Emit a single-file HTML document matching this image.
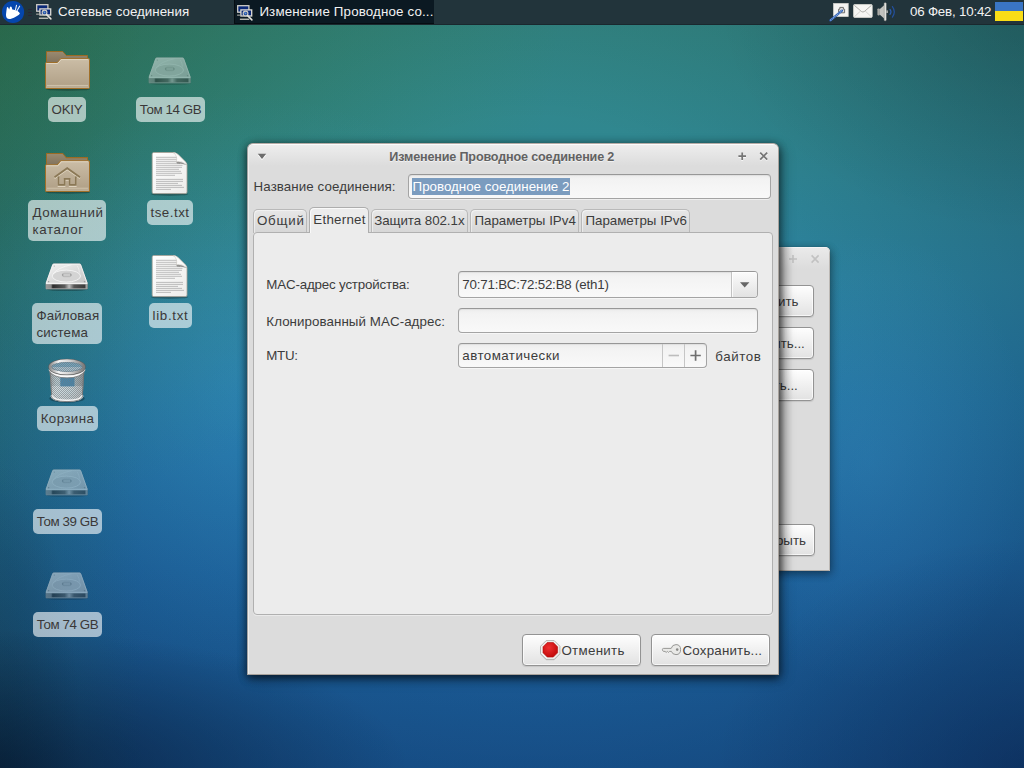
<!DOCTYPE html>
<html lang="ru">
<head>
<meta charset="utf-8">
<title>Изменение Проводное соединение 2</title>
<style>
*{box-sizing:border-box;margin:0;padding:0}
html,body{width:1024px;height:768px;overflow:hidden}
body{position:relative;font-family:"Liberation Sans","DejaVu Sans",sans-serif;font-size:13.33px;color:#3c3c3c;
background:
radial-gradient(ellipse 40% 18% at 0% 100%, rgba(0,10,30,0.50) 0%, rgba(0,10,30,0) 100%),
radial-gradient(ellipse 8% 40% at 0% 100%, rgba(0,10,30,0.25) 0%, rgba(0,10,30,0) 100%),
radial-gradient(ellipse 30% 30% at 100% 100%, rgba(0,10,50,0.30) 0%, rgba(0,10,50,0) 100%),
radial-gradient(ellipse 30% 30% at 100% 0%, rgba(0,10,20,0.18) 0%, rgba(0,10,20,0) 100%),
linear-gradient(90deg, rgba(40,100,40,0.16) 0%, rgba(40,100,40,0) 14%),
radial-gradient(ellipse 16% 30% at 85% 60%, rgba(80,170,235,0.15) 0%, rgba(80,170,235,0) 100%),
radial-gradient(ellipse 30% 38% at 24% 50%, rgba(70,175,235,0.22) 0%, rgba(70,175,235,0) 100%),
radial-gradient(ellipse 78% 88% at 52% 42%, rgba(0,0,0,0) 30%, rgba(0,10,28,0.34) 100%),
radial-gradient(ellipse 55% 65% at 0% 0%, rgba(60,135,45,0.40) 0%, rgba(60,135,45,0) 100%),
linear-gradient(180deg,#348882 0%,#308790 18%,#2c83a0 36%,#2578a6 52%,#1f69a6 74%,#1b5c9c 100%);
}
.abs{position:absolute}
/* panel */
#panel{position:absolute;left:0;top:0;width:1024px;height:25px;background:#22343b;border-bottom:1px solid #1a282e;color:#fff}
#panel .t{position:absolute;top:3px;line-height:17px;font-size:13.33px;white-space:nowrap;color:#f2f2f2}
#task2{position:absolute;left:234px;top:0;width:200px;height:24px;background:#0b1922;box-shadow:inset 1px 0 0 #060d12,inset 0 -1px 0 #060d12}
/* desktop labels */
.lbl{position:absolute;background:rgba(255,255,255,0.6);border-radius:5px;color:#3a3838;font-size:13.33px;line-height:16.33px;padding:5.2px 0 3.5px 0;white-space:nowrap;text-align:center}
.lbl.two{text-align:left;padding-left:4.4px}
/* window */
#win{position:absolute;left:247px;top:143px;width:532px;height:532px;background:#dcdcdc;border:1px solid #a8a29c;border-top-color:#b5aba6;border-left-color:#a2a2a2;border-radius:6px 6px 0 0;box-shadow:inset 0 1px 0 #fbfbfb,inset 1px 0 0 #ececec,0 2px 8px rgba(0,0,0,0.42),0 3px 9px rgba(0,0,0,0.34),4px 4px 14px rgba(0,0,0,0.24)}
#tb{position:absolute;left:1px;top:1px;right:0;height:21px;border-radius:4px 4px 0 0;background:linear-gradient(#ededed,#dcdcdc)}
#title{position:absolute;white-space:nowrap;font-weight:bold;font-size:12.6px;letter-spacing:-0.16px;line-height:17px;color:#626262;text-shadow:0 1px 0 rgba(255,255,255,0.6)}
.entry{position:absolute;background:linear-gradient(#ededed 0,#f3f3f3 5px,#f9f9f9 100%);border:1px solid #a4a4a4;border-top-color:#979797;border-radius:4px;box-shadow:inset 0 1px 1px rgba(0,0,0,0.06), 0 1px 0 rgba(255,255,255,0.55)}
.sel{position:absolute;background:#7b9cbf}
.tab{position:absolute;top:65px;height:24px;border:1px solid #b9b9b9;border-bottom:none;border-radius:5px 5px 0 0;background:linear-gradient(#e7e7e7,#d6d6d6);box-shadow:inset 1px 1px 0 rgba(255,255,255,0.45);font-size:13.33px;white-space:nowrap;color:#3c3c3c}
.tab span{position:absolute;top:2.4px;line-height:17px}
.tab.act{top:63px;height:26px;background:#ececec;border-color:#adadad;box-shadow:inset 1px 1px 0 rgba(255,255,255,0.7)}
.tab.act span{top:3.3px}
#page{position:absolute;left:5px;top:88px;width:520px;height:383px;background:#ececec;border:1px solid #b0b0b0;border-radius:4px;box-shadow:0 1px 0 rgba(255,255,255,0.4)}
.l{position:absolute;white-space:nowrap;line-height:17px;font-size:13.33px;color:#3c3c3c}
.btn{position:absolute;border:1px solid #939393;border-radius:4px;background:linear-gradient(#fefefe,#f0f0f0 50%,#e2e2e2);box-shadow:inset 0 0 0 1px rgba(255,255,255,0.7),0 1px 1px rgba(0,0,0,0.10);font-size:13.33px;line-height:17px;white-space:nowrap;color:#3c3c3c}
.btn span{margin-top:7px}
.cbtn{position:absolute;right:0;top:0;width:26px;height:25px;border-left:1px solid #c2c2c2;border-radius:0 3px 3px 0;background:linear-gradient(#fbfbfb,#e2e2e2);box-shadow:inset 1px 1px 0 rgba(255,255,255,0.8)}
.sb{position:absolute;top:0;width:22px;height:23px;border-left:1px solid #c6c6c6}
/* second window */
#win2{position:absolute;left:764px;top:247px;width:66px;height:324px;background:#dcdcdc;border-radius:0 5px 0 0;box-shadow:inset 0 1px 0 #f4f4f4,inset -1px 0 0 #bcb8b4,inset 0 -1px 0 #b2aca6,0 0 1px rgba(0,0,0,0.3),0 2px 8px rgba(0,0,0,0.32),2px 3px 10px rgba(0,0,0,0.2);overflow:visible}
#tb2{position:absolute;left:0;top:1px;right:1px;height:21px;border-radius:0 4px 0 0;background:linear-gradient(#eaeaea,#dcdcdc)}
#sh2{position:absolute;left:15px;top:0;width:14px;height:324px;background:linear-gradient(90deg,rgba(0,0,0,0.30),rgba(0,0,0,0.10) 45%,rgba(0,0,0,0))}
</style>
</head>
<body>

<svg width="0" height="0" style="position:absolute">
<defs>
  <linearGradient id="gFront" x1="0" y1="0" x2="0" y2="1"><stop offset="0" stop-color="#cbbda6"/><stop offset="0.85" stop-color="#b3a38a"/><stop offset="1" stop-color="#bfb199"/></linearGradient>
  <linearGradient id="gBack" x1="0" y1="0" x2="0" y2="1"><stop offset="0" stop-color="#9a8a70"/><stop offset="1" stop-color="#7f705a"/></linearGradient>
  <linearGradient id="gDrvTop" x1="0" y1="0" x2="1" y2="1"><stop offset="0" stop-color="#f4f4f4"/><stop offset="0.5" stop-color="#dcdcdc"/><stop offset="1" stop-color="#c4c4c4"/></linearGradient>
  <linearGradient id="gDrvFront" x1="0" y1="0" x2="1" y2="0"><stop offset="0" stop-color="#9a9a9a"/><stop offset="0.12" stop-color="#8a8a8a"/><stop offset="0.16" stop-color="#2c2c2c"/><stop offset="0.45" stop-color="#5a5a5a"/><stop offset="0.56" stop-color="#bdbdbd"/><stop offset="0.68" stop-color="#555"/><stop offset="0.95" stop-color="#3a3a3a"/><stop offset="0.97" stop-color="#b0b0b0"/><stop offset="1" stop-color="#8c8c8c"/></linearGradient>
  <linearGradient id="gDoc" x1="0" y1="0" x2="1" y2="1"><stop offset="0" stop-color="#ffffff"/><stop offset="1" stop-color="#ececea"/></linearGradient>
  <linearGradient id="gRim" x1="0" y1="0" x2="1" y2="0"><stop offset="0" stop-color="#8e8e8e"/><stop offset="0.25" stop-color="#f4f4f4"/><stop offset="0.6" stop-color="#d0d0d0"/><stop offset="1" stop-color="#7c7c7c"/></linearGradient>
  <linearGradient id="gBody" x1="0" y1="0" x2="1" y2="0"><stop offset="0" stop-color="#9a9a9a" stop-opacity="0.95"/><stop offset="0.2" stop-color="#e8e8e8" stop-opacity="0.75"/><stop offset="0.6" stop-color="#dcdcdc" stop-opacity="0.7"/><stop offset="1" stop-color="#8a8a8a" stop-opacity="0.95"/></linearGradient>
  <radialGradient id="gStop" cx="0.4" cy="0.35" r="0.7"><stop offset="0" stop-color="#ee3030"/><stop offset="1" stop-color="#c00808"/></radialGradient>
  <pattern id="mesh" width="2" height="2" patternUnits="userSpaceOnUse"><rect width="1" height="1" fill="#6e7478" fill-opacity="0.55"/><rect x="1" y="1" width="1" height="1" fill="#6e7478" fill-opacity="0.55"/></pattern>

  <symbol id="folder" viewBox="0 0 46 42">
    <ellipse cx="23" cy="39.2" rx="22" ry="1.6" fill="#000" fill-opacity="0.28"/>
    <path d="M1.5,1.5 H17.8 L21.3,5.5 H42.5 V14 H1.5 Z" fill="url(#gBack)" stroke="#9b6b24" stroke-width="1" stroke-linejoin="round"/>
    <path d="M0.5,13.5 Q0.5,12.5 1.5,12.5 H12.3 L15.8,8.6 H43.5 Q44.5,8.6 44.5,9.6 V37.5 Q44.5,38.5 43.5,38.5 H1.5 Q0.5,38.5 0.5,37.5 Z" fill="url(#gFront)" stroke="#a06f28" stroke-width="1" stroke-linejoin="round"/>
    <path d="M1.5,14 Q1.5,13.5 2,13.5 H12.7 L16.2,9.6 H43" fill="none" stroke="#e2d8c6" stroke-width="1" stroke-opacity="0.9"/>
    <path d="M2,35.5 H43" stroke="#d6cab4" stroke-width="1" stroke-opacity="0.7"/>
  </symbol>

  <symbol id="home" viewBox="0 0 46 42" preserveAspectRatio="none">
    <use href="#folder"/>
    <g fill="none" stroke="#e6dcc8" stroke-width="1.6" stroke-opacity="0.85" transform="translate(0,1.2)"><path d="M9.5,24.6 L22.2,15.8 L35,24.6"/><path d="M13.5,24 V32.2 H19.6 V26.2 H24.6 V32.2 H30.8 V24"/></g>
    <g fill="none" stroke="#8b7856" stroke-width="1.7"><path d="M9.5,24.6 L22.2,15.8 L35,24.6"/><path d="M13.5,24 V32.2 H19.6 V26.2 H24.6 V32.2 H30.8 V24"/></g>
  </symbol>

  <symbol id="drive" viewBox="0 0 46 30">
    <ellipse cx="23" cy="27.6" rx="21.5" ry="1.6" fill="#000" fill-opacity="0.25"/>
    <path d="M0.6,21.6 Q0.6,20.6 1.1,19.8 L7.6,1.6 Q8,0.6 9,0.6 H36 Q37,0.6 37.4,1.6 L43.9,19.8 Q44.4,20.6 44.4,21.6 V26.2 Q44.4,27.2 43.4,27.2 H1.6 Q0.6,27.2 0.6,26.2 Z" fill="#8f8f8f"/>
    <path d="M1.2,21 L8,1.8 Q8.3,1.1 9.2,1.1 H35.8 Q36.7,1.1 37,1.8 L43.8,21 Z" fill="url(#gDrvTop)" stroke="#fafafa" stroke-width="0.9"/>
    <ellipse cx="22.2" cy="13.6" rx="14.7" ry="6.2" fill="#d4d4d4" stroke="#f4f4f4" stroke-width="0.9"/>
    <path d="M8.2,11.6 Q13,4.6 27.5,1.8" fill="none" stroke="#f6f6f6" stroke-width="0.9"/>
    <path d="M33.5,3 Q35.5,6 35.8,10" fill="none" stroke="#f0f0f0" stroke-width="0.8"/>
    <rect x="17.9" y="10.6" width="9.4" height="3.6" rx="1.8" fill="#cacaca" stroke="#a8a8a8" stroke-width="0.6"/>
    <circle cx="18.5" cy="12.4" r="0.7" fill="#8a8a8a"/><circle cx="26.8" cy="12.4" r="0.7" fill="#8a8a8a"/>
    <circle cx="3.8" cy="19.4" r="0.7" fill="#9a9a9a"/><circle cx="41" cy="19.4" r="0.7" fill="#9a9a9a"/><circle cx="9.6" cy="3.2" r="0.6" fill="#aaa"/>
    <path d="M1,21.6 H44" stroke="#fbfbfb" stroke-width="1.1"/>
    <rect x="1.2" y="22.3" width="42.6" height="4.3" fill="url(#gDrvFront)"/>
    <path d="M1,26.7 H44" stroke="#a4a4a4" stroke-width="0.8"/>
  </symbol>

  <symbol id="doc" viewBox="0 0 40 46">
    <ellipse cx="19.6" cy="42.2" rx="18.4" ry="1.6" fill="#000" fill-opacity="0.3"/>
    <path d="M3.7,0.5 H23 Q26,0.5 28,2.5 L35.5,10 Q37,11.5 37,13.5 V40.1 Q37,41.6 35.5,41.6 H3.7 Q2.2,41.6 2.2,40.1 V2 Q2.2,0.5 3.7,0.5 Z" fill="url(#gDoc)" stroke="#aaa297" stroke-width="0.8"/>
    <g stroke="#b6b6b6" stroke-width="0.9">
      <path d="M6,5.3H27.5M6,7.3H28.5M6,9.3H29M6,11.3H30M6,13.3H32.5M6,15.3H32M6,17.3H29M6,19.3H31M6,21.3H32M6,23.3H25M6,27.4H33M6,29.4H33M6,31.4H28M6,33.4H32M6,35.4H34M6,37.4H21"/>
    </g>
    <path d="M26.2,9.6 Q31.5,8.8 36.9,13 Q32,11.2 27,11.4 Z" fill="#6e6e6c" fill-opacity="0.75"/>
    <path d="M23.4,0.6 Q27.8,4 26.4,9.8 Q32,8.4 36.8,12.6 Q36.6,11.2 35.5,10 L28,2.5 Q26,0.6 23.4,0.6 Z" fill="#fbfbfa" stroke="#c4c0ba" stroke-width="0.5" stroke-linejoin="round"/>
  </symbol>

  <symbol id="trash" viewBox="0 0 44 50">
    <ellipse cx="22" cy="42.4" rx="17.6" ry="4.4" fill="#000" fill-opacity="0.28"/>
    <path d="M4.4,11 L6.2,39.6 Q6.6,45.4 22,45.4 Q37.4,45.4 37.8,39.6 L39.6,11 Z" fill="url(#gBody)"/>
    <rect x="15.3" y="19.6" width="14.2" height="11.2" fill="#2a78a8" fill-opacity="0.8"/>
    <path d="M6,30 H38 L37.6,40 Q37,45 22,45 Q7,45 6.4,40 Z" fill="#fff" fill-opacity="0.35"/>
    <path d="M4.4,11 L6.2,39.6 Q6.6,45.4 22,45.4 Q37.4,45.4 37.8,39.6 L39.6,11 Z" fill="url(#mesh)"/>
    <path d="M6.6,39.4 Q7.6,44.6 22,44.6 Q36.4,44.6 37.4,39.4" fill="none" stroke="#f4f4f4" stroke-width="2.4" stroke-opacity="0.95"/>
    <path d="M6.2,39.6 Q6.6,45.6 22,45.6 Q37.4,45.6 37.8,39.6" fill="none" stroke="#6e6e6e" stroke-width="0.8"/>
    <path d="M5,12 L6.6,39 M39,12 L37.4,39" stroke="#6a6a6a" stroke-width="0.9" stroke-opacity="0.8"/>
    <ellipse cx="22" cy="10.9" rx="15.4" ry="5" fill="#7fb0cc" fill-opacity="0.6"/>
    <ellipse cx="22" cy="10.9" rx="15.4" ry="5" fill="url(#mesh)"/>
    <path d="M4,11 V14.2 Q8,21.6 22,21.6 Q36,21.6 40,14.2 V11 Z" fill="#cfcfcf"/>
    <path d="M4.2,13.4 Q8,20.6 22,20.6 Q36,20.6 39.8,13.4" fill="none" stroke="#fafafa" stroke-width="1.6"/>
    <path d="M4,14.4 Q8,21.9 22,21.9 Q36,21.9 40,14.4" fill="none" stroke="#7a7a7a" stroke-width="0.7"/>
    <ellipse cx="22" cy="10.9" rx="15.4" ry="5" fill="#2a6f96" fill-opacity="0.0"/>
    <ellipse cx="22" cy="10.9" rx="16.8" ry="6.3" fill="none" stroke="#5e5e5e" stroke-width="3.8"/>
    <ellipse cx="22" cy="10.9" rx="16.8" ry="6.3" fill="none" stroke="url(#gRim)" stroke-width="2.7"/>
    <ellipse cx="22" cy="10.9" rx="15.4" ry="5" fill="#7fb0cc" fill-opacity="0.55"/>
    <ellipse cx="22" cy="10.9" rx="15.4" ry="5" fill="url(#mesh)"/>
  </symbol>

  <symbol id="netwin" viewBox="0 0 16 16">
    <rect x="0.7" y="0.7" width="11.2" height="6.5" fill="#0a2878" stroke="#cfcdc7" stroke-width="1.3"/>
    <rect x="0.1" y="9.6" width="2.8" height="1.1" fill="#b4b2ac"/>
    <rect x="3.9" y="4.9" width="10.8" height="6.1" fill="#0a2878" stroke="#dddbd5" stroke-width="1.3"/>
    <rect x="2.9" y="13.6" width="9.4" height="1.3" fill="#cbc9c3"/>
    <circle cx="8.55" cy="8.55" r="2.4" fill="#3f6fb8" fill-opacity="0.55" stroke="#cfcdc7" stroke-width="1.1"/>
    <path d="M7.4,7.4 L9.2,9" stroke="#6b9be0" stroke-width="1.1"/>
    <path d="M10.6,10.6 L14.9,14.9" stroke="#e6e4de" stroke-width="1.5" stroke-linecap="round"/>
  </symbol>
</defs>
</svg>
<div id="panel">
  <svg class="abs" style="left:0;top:0" width="34" height="24" viewBox="0 0 34 24">
    <circle cx="13.05" cy="12" r="11.1" fill="#0546ad"/>
    <path d="M6.9,7.4 Q7.6,6.6 8.2,7.6 L9.2,9.5 L10,7 Q10.8,6 11.6,7 L12.3,9.6 Q15,9.9 17.6,10.9 Q19.4,11.9 19.9,13.4 Q19.2,14.9 17.4,15.8 Q14,18 10.4,18.9 Q8,19.2 6.8,18 Q5.8,16.6 6,14.6 Q6.3,11 6.9,7.4 Z" fill="#fff"/>
    <path d="M15.5,9.6 L16.5,5.3 M17.2,10.4 L19.6,6.2" stroke="#fff" stroke-width="1.1" stroke-linecap="round" fill="none" stroke-opacity="0.92"/>
    <path d="M28.2,9.5h3.6M28.2,12.5h3.6M28.2,15.5h3.6" stroke="#2a2434" stroke-width="1"/>
  </svg>
  <svg class="abs" style="left:36.4px;top:4.4px" width="16" height="16"><use href="#netwin"/></svg>
  <div id="task2"></div>
  <svg class="abs" style="left:237.2px;top:5.2px" width="16" height="16"><use href="#netwin"/></svg>
  <div class="t" style="left:58px">Сетевые соединения</div>
  <div class="t" style="left:259.4px;letter-spacing:0.15px">Изменение Проводное со...</div>
  <!-- tray -->
  <svg class="abs" style="left:828px;top:0" width="72" height="24" viewBox="0 0 72 24">
    <rect x="5.6" y="3.5" width="14.6" height="13" fill="#f4f4f2" stroke="#d4d4d0" stroke-width="0.8"/>
    <path d="M10.6,12.8 V9.2 H11.8 V7.4 H15.4 V9.2 H16.6 V12.8 Z" fill="#e0e0de" stroke="#6e6e6e" stroke-width="1"/>
    <path d="M2.4,20.4 L14,10.6" stroke="#2c5cae" stroke-width="2.3" stroke-linecap="round"/>
    <path d="M2.4,20.4 L14,10.6" stroke="#8db0ea" stroke-width="1.5" stroke-dasharray="0.9 0.9"/>
    <rect x="25.6" y="4.6" width="18.6" height="12.8" rx="0.8" fill="#f6f6f4" stroke="#deded8" stroke-width="0.8"/>
    <path d="M26.4,5.4 L33.6,11.6 Q34.9,12.4 36.2,11.6 L43.4,5.4" fill="none" stroke="#9c9c98" stroke-width="0.8"/>
    <path d="M26.4,16.8 L32.6,11 M43.4,16.8 L37.2,11" fill="none" stroke="#c4c4c0" stroke-width="0.7"/>
    <rect x="49.4" y="8.4" width="2.4" height="7" rx="0.8" fill="#a8a8a4"/>
    <path d="M51.6,9.2 L56.4,5 V18.8 L51.6,14.6 Z" fill="#c2c2be"/>
    <rect x="56.2" y="2.8" width="2" height="18" rx="0.8" fill="#f0f0ec" stroke="#8e8e8a" stroke-width="0.5"/>
    <rect x="58.3" y="10.4" width="1.6" height="2.6" fill="#b0b0ac"/>
    <path d="M62,9.4 Q64,11.8 62,14.4" fill="none" stroke="#2c5cae" stroke-width="1.2" stroke-linecap="round"/>
    <path d="M64.4,6.6 Q68.2,11.8 64.4,17.2" fill="none" stroke="#23509e" stroke-width="1.2" stroke-linecap="round"/>
  </svg>
  <div class="t" style="left:910px;letter-spacing:-0.2px">06 Фев, 10:42</div>
  <div class="abs" style="left:995px;top:2px;width:28px;height:19px;background:linear-gradient(#3a75c4 0,#3a75c4 50%,#f9dd16 50%,#f9dd16 100%)"></div>
</div>


<!-- desktop icons -->
<svg class="abs" style="left:44.5px;top:49.9px" width="46" height="42"><use href="#folder"/></svg>
<div class="lbl" style="left:48px;top:97px;width:38px;letter-spacing:-0.2px">OKIY</div>
<svg class="abs" style="left:147.7px;top:57.1px;opacity:0.5" width="44.3" height="28.9"><use href="#drive"/></svg>
<div class="lbl" style="left:136px;top:97px;width:69px;letter-spacing:-0.42px">Том 14 GB</div>
<svg class="abs" style="left:44.6px;top:151.5px" width="46" height="43"><use href="#home" width="46" height="43"/></svg>
<div class="lbl two" style="left:28px;top:200px;width:78px;letter-spacing:0.65px">Домашний<br>каталог</div>
<svg class="abs" style="left:150.1px;top:151.7px" width="40" height="46"><use href="#doc"/></svg>
<div class="lbl" style="left:147px;top:200px;width:46px;letter-spacing:0.5px">tse.txt</div>
<svg class="abs" style="left:44.7px;top:263.1px" width="44.3" height="28.9"><use href="#drive"/></svg>
<div class="lbl two" style="left:32px;top:303px;width:70px;letter-spacing:0.12px">Файловая<br>система</div>
<svg class="abs" style="left:150.1px;top:254.7px" width="40" height="46"><use href="#doc"/></svg>
<div class="lbl" style="left:149px;top:303px;width:43px;letter-spacing:0.7px">lib.txt</div>
<svg class="abs" style="left:45.1px;top:356px" width="44" height="50"><use href="#trash"/></svg>
<div class="lbl" style="left:37px;top:406px;width:61px;letter-spacing:0.4px">Корзина</div>
<svg class="abs" style="left:44.7px;top:469px;opacity:0.5" width="44.3" height="28.9"><use href="#drive"/></svg>
<div class="lbl" style="left:33px;top:509px;width:69px;letter-spacing:-0.42px">Том 39 GB</div>
<svg class="abs" style="left:44.7px;top:572px;opacity:0.5" width="44.3" height="28.9"><use href="#drive"/></svg>
<div class="lbl" style="left:33px;top:612px;width:69px;letter-spacing:-0.42px">Том 74 GB</div>

<div id="win2">
  <div id="tb2"></div>
  <svg class="abs" style="left:24px;top:4px" width="40" height="16" viewBox="0 0 40 16"><path d="M1,8h8M5,4v8" stroke="#c2c2c2" stroke-width="1.6" fill="none"/><path d="M23.6,4.4l7,7.2M30.6,4.4l-7,7.2" stroke="#c2c2c2" stroke-width="1.6" fill="none"/></svg>
  <div class="btn" style="left:-30px;top:38px;width:80px;height:32px"><span style="position:absolute;right:14.5px;top:0">Добавить</span></div>
  <div class="btn" style="left:-30px;top:80px;width:80px;height:32px"><span style="position:absolute;right:8.2px;top:0">Изменить...</span></div>
  <div class="btn" style="left:-30px;top:122px;width:80px;height:32px"><span style="position:absolute;right:15.2px;top:0">Удалить...</span></div>
  <div class="btn" style="left:-30px;top:277px;width:81px;height:32px"><span style="position:absolute;right:8px;top:0">Закрыть</span></div>
  <div id="sh2"></div>
</div>

<div id="win">
  <div id="tb"></div>
  <svg class="abs" style="left:8px;top:8px" width="14" height="10" viewBox="0 0 14 10"><path d="M1.6,2.9 H10.4 L6,8.3 Z" fill="#fff" fill-opacity="0.8"/><path d="M1.8,1.8 H10.2 L6,6.9 Z" fill="#6c6c6c"/></svg>
  <div id="title" style="left:141.3px;top:5.1px">Изменение Проводное соединение 2</div>
  <svg class="abs" style="left:488px;top:6px" width="36" height="14" viewBox="0 0 36 14"><path d="M2.4,7.2h7.6M6.2,3.4v7.6" stroke="#fff" stroke-opacity="0.7" stroke-width="1.8" fill="none"/><path d="M2.4,6.2h7.6M6.2,2.4v7.6" stroke="#757575" stroke-width="1.7" fill="none"/><path d="M24.2,3.6l7,7M31.2,3.6l-7,7" stroke="#fff" stroke-opacity="0.7" stroke-width="1.8" fill="none"/><path d="M24.2,2.6l7,7M31.2,2.6l-7,7" stroke="#757575" stroke-width="1.7" fill="none"/></svg>
  <div class="l" style="left:5.6px;top:33.7px;letter-spacing:0.08px">Название соединения:</div>
  <div class="entry" style="left:160px;top:30px;width:363px;height:25px"><span class="sel" style="left:3px;top:3px;width:158px;height:17px"></span><span class="l" style="left:3.6px;top:3.0px;color:#fff">Проводное соединение 2</span></div>
  <div class="tab" style="left:5px;width:54px"><span style="left:2.9px;letter-spacing:0.8px">Общий</span></div>
  <div class="tab" style="left:123px;width:97px"><span style="left:2.2px;letter-spacing:-0.05px">Защита 802.1x</span></div>
  <div class="tab" style="left:222px;width:109px"><span style="left:3.4px">Параметры IPv4</span></div>
  <div class="tab" style="left:333px;width:109px"><span style="left:3.4px">Параметры IPv6</span></div>
  <div id="page"></div>
  <div class="tab act" style="left:61px;width:60px"><span style="left:3.3px;letter-spacing:0.25px">Ethernet</span></div>
  <div class="l" style="left:18.3px;top:131.6px;letter-spacing:-0.17px">MAC-адрес устройства:</div>
  <div class="entry combo" style="left:210px;top:127px;width:300px;height:27px"><span class="l" style="left:3.3px;top:3.6px;letter-spacing:-0.2px">70:71:BC:72:52:B8 (eth1)</span>
    <div class="cbtn"><svg width="12" height="8" viewBox="0 0 12 8" style="position:absolute;left:7.4px;top:8.7px"><path d="M1,1.2 H10.4 L5.7,6.4 Z" fill="#666"/></svg></div></div>
  <div class="l" style="left:18.3px;top:168.6px;letter-spacing:0.07px">Клонированный MAC-адрес:</div>
  <div class="entry" style="left:210px;top:164px;width:300px;height:25px"></div>
  <div class="l" style="left:18.3px;top:203.4px;letter-spacing:-0.3px">MTU:</div>
  <div class="entry" style="left:210px;top:199px;width:249px;height:25px"><span class="l" style="left:3.3px;top:3.3px;letter-spacing:0.45px">автоматически</span>
    <div class="sb" style="left:203px"><svg width="22" height="23" viewBox="0 0 22 23"><path d="M5.6,11.5h10.4" stroke="#bdbdbd" stroke-width="1.6"/></svg></div>
    <div class="sb" style="left:225px"><svg width="22" height="23" viewBox="0 0 22 23"><path d="M5.4,11.5h10.4M10.6,6.3v10.4" stroke="#6e6e6e" stroke-width="1.7" fill="none"/></svg></div></div>
  <div class="l" style="left:467.3px;top:203.6px;letter-spacing:0.6px">байтов</div>
  <div class="btn" style="left:274px;top:490px;width:119px;height:32px">
    <svg class="abs" style="left:17px;top:4.6px" width="22" height="22" viewBox="0 0 22 22"><path d="M6.31,1.6 H14.09 L19.6,7.11 V14.69 L14.09,20.2 H6.31 L0.8,14.69 V7.11 Z" fill="#000" fill-opacity="0.16"/><path d="M6.18,0.6 H14.22 L19.9,6.28 V13.72 L14.22,19.4 H6.18 L0.5,13.72 V6.28 Z" fill="#f2f2f0" stroke="#a6a6a2" stroke-width="0.8"/><path d="M7.28,2.5 H13.32 L17.6,6.78 V12.82 L13.32,17.1 H7.28 L3.0,12.82 V6.78 Z" fill="url(#gStop)" stroke="#b40c0c" stroke-width="0.6"/></svg>
    <span style="position:absolute;left:38.4px;top:0;letter-spacing:0.3px">Отменить</span></div>
  <div class="btn" style="left:403px;top:490px;width:119px;height:32px">
    <svg class="abs" style="left:9px;top:8.4px" width="22" height="14" viewBox="0 0 22 14"><path d="M1.4,6.6 Q1.4,5.4 2.6,5.4 H10.2 Q11.2,1.6 15,1.6 Q19.6,1.6 19.6,6.6 Q19.6,11.6 15,11.6 Q11.4,11.6 10.4,8.4 H8.6 L7.6,9.4 L6.4,8.4 L5.2,9.4 L4,8.4 H2.6 Q1.4,8 1.4,6.6 Z" fill="#e9e9e7" stroke="#8e8e8c" stroke-width="0.9"/><circle cx="16.2" cy="6.6" r="1.3" fill="#8a8a88"/></svg>
    <span style="position:absolute;left:30.5px;top:0;letter-spacing:0.2px">Сохранить...</span></div>
</div>
</body>
</html>
